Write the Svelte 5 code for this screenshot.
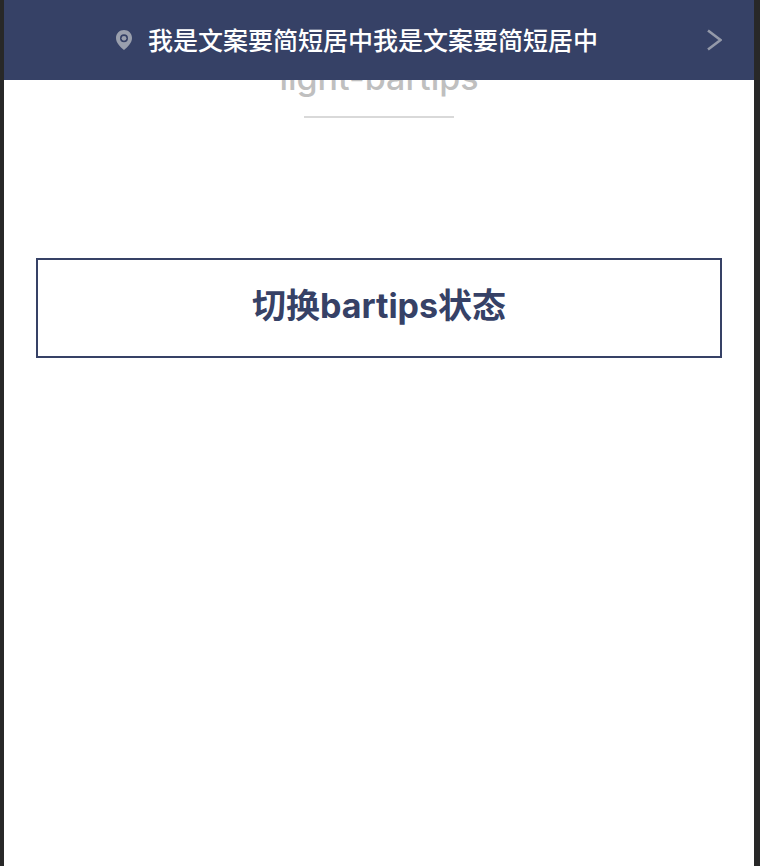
<script>
  let visible = $state(true);
  const message = '我是文案要简短居中我是文案要简短居中';

  function toggle() {
    visible = !visible;
  }
</script>

<div class="page">
  {#if visible}
    <a class="bartips" href="#detail">
      <span class="content">
        <svg class="pin" viewBox="0 0 16 20" aria-hidden="true">
          <path
            fill="currentColor"
            fill-rule="evenodd"
            d="M8 0C3.5 0 0 3.4 0 7.9c0 4.7 4 8.6 8 12.1 4-3.5 8-7.4 8-12.1C16 3.4 12.5 0 8 0zm0 4.300a4 4 0 1 1 0 8 4 4 0 0 1 0-8z"
          />
          <circle cx="8" cy="8.3" r="2.4" fill="currentColor" />
        </svg>
        <span class="message">{message}</span>
      </span>
      <svg class="arrow" viewBox="0 0 16 22" aria-hidden="true">
        <path d="M2 1.5L14.500 11L2 20.500" fill="none" stroke="currentColor" stroke-width="2.6" />
      </svg>
    </a>
  {/if}

  <main>
    <h1>light-bartips</h1>
    <button type="button" onclick={toggle}>切换bartips状态</button>
  </main>
</div>

<style>
  :global(body) {
    background: #282828;
  }

  .page {
    position: relative;
    box-sizing: border-box;
    min-height: 100vh;
    margin: 0 6px 0 4px;
    background: #fff;
    font-family: Inter, 'Noto Sans CJK SC', sans-serif;
  }

  .bartips {
    position: absolute;
    top: 0;
    left: 0;
    right: 0;
    box-sizing: border-box;
    display: flex;
    align-items: center;
    height: 80px;
    padding: 0 32px;
    background: #364166;
    color: #fff;
    text-decoration: none;
  }

  .content {
    flex: 1;
    display: flex;
    align-items: center;
    justify-content: center;
    gap: 16px;
    margin-right: 28px;
  }

  .message {
    padding-top: 2px;
    font-size: 25px;
    font-weight: 500;
    line-height: 36px;
    white-space: nowrap;
  }

  .pin {
    flex: none;
    width: 16px;
    height: 20px;
    color: #9a9fad;
  }

  .arrow {
    flex: none;
    width: 16px;
    height: 22px;
    color: #9499a9;
  }

  main {
    display: flex;
    flex-direction: column;
    align-items: center;
    padding: 56px 32px 0;
  }

  h1 {
    display: flex;
    flex-direction: column;
    align-items: center;
    margin: 0;
    color: #bfbfbf;
    font-size: 34px;
    font-weight: 500;
    line-height: 44px;
  }

  h1::after {
    content: '';
    width: 150px;
    height: 2px;
    margin-top: 16px;
    background: #d9d9d9;
  }

  button {
    box-sizing: border-box;
    width: 100%;
    height: 100px;
    margin: 140px 0 0;
    padding: 0 0 4px;
    border: 2px solid #364166;
    background: #fff;
    color: #364166;
    font-family: inherit;
    font-size: 34px;
    font-weight: 700;
    line-height: 44px;
    cursor: pointer;
  }
</style>
